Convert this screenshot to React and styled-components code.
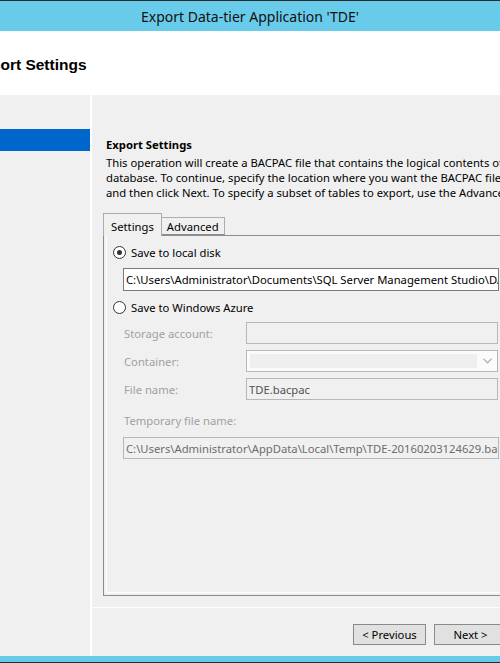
import React from 'react';
import styled, { createGlobalStyle } from 'styled-components';

const GlobalStyle = createGlobalStyle`
    html, body {
        margin:0;
        padding:0;
        background:#f0f0f0;
    }
    body {
        font-family:"Noto Sans", "Liberation Sans", sans-serif;
        font-size:11.25px;
        color:#000;
    }
`

const descriptionLines = [
    'This operation will create a BACPAC file that contains the logical contents of the',
    'database. To continue, specify the location where you want the BACPAC file saved,',
    'and then click Next. To specify a subset of tables to export, use the Advanced tab.',
];

function Radio({ checked, label }) {
    return (
        <RadioRow>
            <RadioCircle checked={checked} />
            <span>{label}</span>
        </RadioRow>
    )
}

function App() {
    return (
        <>
            <GlobalStyle />
            <Window>
                <TopEdge />
                <TitleBar>Export Data-tier Application 'TDE'</TitleBar>
                <Header>
                    <HeaderTitle>Export Settings</HeaderTitle>
                </Header>
                <Body>
                    <Nav>
                        <NavItem selected />
                    </Nav>
                    <RightPanel>
                        <Main>
                            <Intro>
                                <SectionTitle>Export Settings</SectionTitle>
                                <Description>
                                    {descriptionLines.map((line) => (
                                        <div key={line}>{line}</div>
                                    ))}
                                </Description>
                            </Intro>
                            <Tabs>
                                <TabStrip>
                                    <Tab selected>Settings</Tab>
                                    <Tab>Advanced</Tab>
                                </TabStrip>
                                <Pane>
                                    <PaneInner>
                                        <Radio checked label="Save to local disk" />
                                        <TextBox wide>C:\Users\Administrator\Documents\SQL Server Management Studio\DAC Packages\TDE.bacpac</TextBox>
                                        <Radio label="Save to Windows Azure" />
                                        <FormGrid>
                                            <FieldLabel>Storage account:</FieldLabel>
                                            <TextBox disabled />
                                            <FieldLabel>Container:</FieldLabel>
                                            <Combo>
                                                <ComboField />
                                                <ComboArrow>
                                                    <svg width="9" height="6" viewBox="0 0 9 6">
                                                        <path d="M0.5 0.8 L4.5 4.8 L8.5 0.8" fill="none" stroke="#b4b4b4" strokeWidth="1.3" />
                                                    </svg>
                                                </ComboArrow>
                                            </Combo>
                                            <FieldLabel>File name:</FieldLabel>
                                            <TextBox disabled dark>TDE.bacpac</TextBox>
                                        </FormGrid>
                                        <TempLabel>Temporary file name:</TempLabel>
                                        <TextBox wide disabled>C:\Users\Administrator\AppData\Local\Temp\TDE-20160203124629.bacpac</TextBox>
                                    </PaneInner>
                                </Pane>
                            </Tabs>
                        </Main>
                        <Footer>
                            <Button>&lt; Previous</Button>
                            <Button>Next &gt;</Button>
                        </Footer>
                    </RightPanel>
                </Body>
                <BottomBar />
                <BottomEdge />
            </Window>
        </>
    )
}

export default App;

const Window = styled.div`
    width:500px;
    height:663px;
    overflow:hidden;
    display:flex;
    flex-direction:column;
    background:#f0f0f0;
`

const TopEdge = styled.div`
    height:1px;
    background:#2b2b2b;
    flex:none;
`

const TitleBar = styled.div`
    height:30px;
    flex:none;
    background:#69cbea;
    display:flex;
    align-items:center;
    justify-content:center;
    font-size:14px;
    color:#111;
`

const Header = styled.div`
    height:64px;
    flex:none;
    box-sizing:border-box;
    padding-top:3px;
    background:#fff;
    display:flex;
    align-items:center;
    overflow:hidden;
`

const HeaderTitle = styled.div`
    margin-left:-28px;
    font-family:"Liberation Sans", Arial, sans-serif;
    font-weight:bold;
    font-size:15.5px;
    white-space:nowrap;
`

const Body = styled.div`
    flex:1;
    display:flex;
    min-height:0;
`

const Nav = styled.div`
    width:90px;
    flex:none;
    border-right:2px solid #fff;
    padding-top:34px;
`

const NavItem = styled.div`
    height:22px;
    background:${(p) => (p.selected ? '#0066cc' : 'transparent')};
`

const RightPanel = styled.div`
    width:420px;
    flex:none;
    display:flex;
    flex-direction:column;
`

const Main = styled.div`
    flex:1;
    display:flex;
    flex-direction:column;
    padding:42px 0 11px 11px;
    border-bottom:1px solid #fff;
`

const Intro = styled.div`
    padding-left:3px;
`

const SectionTitle = styled.div`
    font-weight:bold;
    line-height:16px;
`

const Description = styled.div`
    margin-top:2px;
    line-height:15px;
    white-space:nowrap;
`

const Tabs = styled.div`
    margin-top:13px;
    flex:1;
    display:flex;
    flex-direction:column;
`

const TabStrip = styled.div`
    display:flex;
    align-items:flex-end;
    height:23px;
    position:relative;
    z-index:1;
    margin-bottom:-1px;
`

const Tab = styled.div`
    height:${(p) => (p.selected ? '23px' : '18px')};
    box-sizing:border-box;
    padding:${(p) => (p.selected ? '2px 7px 0 7px' : '0 5px')};
    border:1px solid #acacac;
    border-bottom:${(p) => (p.selected ? 'none' : '1px solid #8c8c8c')};
    background:#f0f0f0;
    display:flex;
    align-items:center;
    ${(p) => !p.selected && 'margin-bottom:1px; border-left:none;'}
`

const Pane = styled.div`
    flex:1;
    width:404px;
    border:1px solid #8c8c8c;
    display:flex;
`

const PaneInner = styled.div`
    flex:1;
    margin:0 0 2px 2px;
    border-left:1px solid #fff;
    border-bottom:1px solid #fff;
    display:flex;
    flex-direction:column;
    padding-left:6px;
`

const RadioRow = styled.div`
    margin-top:8px;
    height:16px;
    display:flex;
    align-items:center;
    gap:5px;
    padding-left:0;
`

const RadioCircle = styled.span`
    width:11px;
    height:11px;
    border:1px solid #333;
    border-radius:50%;
    background:#fff;
    display:flex;
    align-items:center;
    justify-content:center;
    &::after {
        content:'';
        width:5px;
        height:5px;
        border-radius:50%;
        background:${(p) => (p.checked ? '#333' : 'transparent')};
    }
`

const TextBox = styled.div`
    box-sizing:border-box;
    height:${(p) => (p.wide && !p.disabled ? '23px' : '22px')};
    width:${(p) => (p.wide ? '376px' : '252px')};
    margin:${(p) => (p.wide ? '8px 0 0 10px' : '0')};
    border:1px solid ${(p) => (p.disabled ? '#b4b8ba' : '#7a7a7a')};
    background:${(p) => (p.disabled ? '#f0f0f0' : '#fff')};
    color:${(p) => (p.disabled ? (p.dark ? '#505050' : '#6d6d6d') : '#000')};
    padding:0 2px;
    display:flex;
    align-items:center;
    white-space:nowrap;
    overflow:hidden;
`

const FormGrid = styled.div`
    margin-top:7px;
    margin-left:11px;
    display:grid;
    grid-template-columns:122px 252px;
    grid-template-rows:22px 22px 22px;
    row-gap:6px;
    align-items:center;
`

const FieldLabel = styled.div`
    color:#a0a0a0;
`

const Combo = styled.div`
    box-sizing:border-box;
    height:22px;
    border:1px solid #b4b8ba;
    background:#fbfbfb;
    display:flex;
    padding:3px 0 3px 3px;
`

const ComboField = styled.div`
    flex:1;
    background:#efefef;
`

const ComboArrow = styled.div`
    width:20px;
    display:flex;
    align-items:center;
    justify-content:center;
`

const TempLabel = styled.div`
    margin:13px 0 0 11px;
    line-height:16px;
    color:#a0a0a0;
`

const Footer = styled.div`
    height:48px;
    flex:none;
    display:flex;
    justify-content:flex-end;
    align-items:flex-start;
    gap:8px;
    padding:16px 5px 0 0;
    box-sizing:border-box;
`

const Button = styled.div`
    width:73px;
    height:21px;
    box-sizing:border-box;
    border:1px solid #8a8a8a;
    background:#e1e1e1;
    display:flex;
    align-items:center;
    justify-content:center;
`

const BottomBar = styled.div`
    height:6px;
    flex:none;
    background:#69cbea;
`

const BottomEdge = styled.div`
    height:1px;
    flex:none;
    background:#2b2b2b;
`
